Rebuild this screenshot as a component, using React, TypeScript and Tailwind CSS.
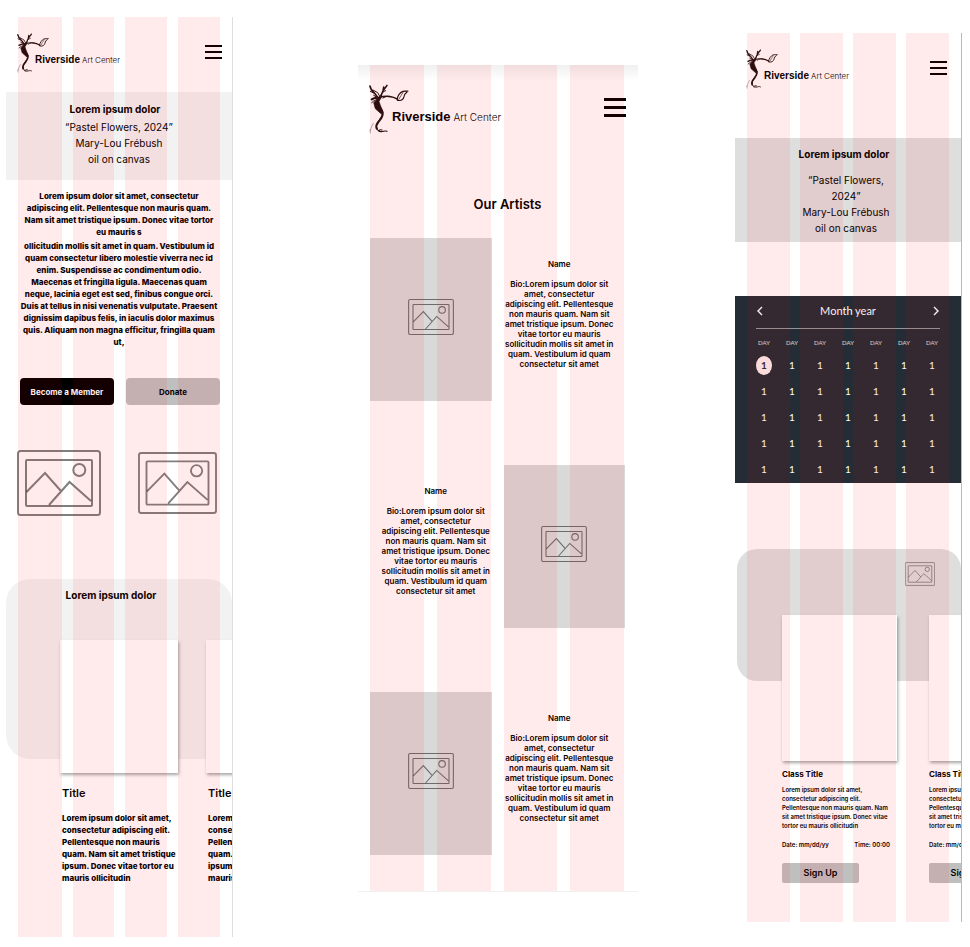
import type { ReactNode } from "react";

const BIO = `Bio:Lorem ipsum dolor sit
amet, consectetur
adipiscing elit. Pellentesque
non mauris quam. Nam sit
amet tristique ipsum. Donec
vitae tortor eu mauris
sollicitudin mollis sit amet in
quam. Vestibulum id quam
consectetur sit amet`;

const INTRO_START = `Lorem ipsum dolor sit amet, consectetur
adipiscing elit. Pellentesque non mauris quam.
Nam sit amet tristique ipsum. Donec vitae tortor
eu mauris s`;

const INTRO_END = `ollicitudin mollis sit amet in quam. Vestibulum id
quam consectetur libero molestie viverra nec id
enim. Suspendisse ac condimentum odio.
Maecenas et fringilla ligula. Maecenas quam
neque, lacinia eget est sed, finibus congue orci.
Duis at tellus in nisi venenatis vulputate. Praesent
dignissim dapibus felis, in iaculis dolor maximus
quis. Aliquam non magna efficitur, fringilla quam
ut,`;

const CARD_TEXT = `Lorem ipsum dolor sit amet,
consectetur adipiscing elit.
Pellentesque non mauris
quam. Nam sit amet tristique
ipsum. Donec vitae tortor eu
mauris ollicitudin`;

const CLASS_TEXT = `Lorem ipsum dolor sit amet,
consectetur adipiscing elit.
Pellentesque non mauris quam. Nam
sit amet tristique ipsum. Donec vitae
tortor eu mauris ollicitudin`;

/** Tinted four-column layout grid laid over a whole screen. */
function ColumnOverlay({ className }: { className: string }) {
  return (
    <div
      aria-hidden="true"
      className={`pointer-events-none absolute inset-0 z-10 grid ${className}`}
    >
      {[0, 1, 2, 3].map((i) => (
        <div key={i} className="bg-[#ff0000]/8" />
      ))}
    </div>
  );
}

function Tree({ className }: { className: string }) {
  return (
    <svg viewBox="0 0 120 150" className={className} fill="none" stroke="#1c0f0f" strokeLinecap="round" aria-hidden="true">
      <path d="M3 6c1 10 8 17 14 22l12 16" strokeWidth="5" />
      <path d="M12 18l14 8 8 14M4 22l8 4M14 34l10 6" strokeWidth="3" />
      <path d="M54 4c-6 10-16 17-18 34M42 20l2-11" strokeWidth="4.500" />
      <path d="M50 20c-6 2-14 8-16 16" strokeWidth="3" />
      <path d="M8 46c8-6 16-4 24-5" strokeWidth="6" />
      <path d="M32 40c12-4 24-4 34-2 8 1 14 5 20 8" strokeWidth="4.500" />
      <path d="M8 56c8-8 14-8 22-12M42 42c8-5 16-7 24-4" strokeWidth="3" />
      <path d="M84 47c2-12 10-22 18-25 5-1 9 0 15-1M86 49c10 2 17-3 19-11 1-6 4-10 9-14" strokeWidth="3.500" />
      <path d="M90 45c4-8 8-13 12-19" strokeWidth="2" />
      <path d="M32 38l-18 18 5 18 18 16 4-10-7-16-4-12 6-10z" fill="#1c0f0f" strokeWidth="2" />
      <path d="M26 66c8 8 15 14 15 22 1 12-7 18-13 26-6 7-8 12-5 20" strokeWidth="6" />
      <path d="M42 84c0 12-10 22-17 32" strokeWidth="3" />
      <path d="M22 128c2 9 6 16 16 15 7-1 10-4 16-1M30 142c0-4 3-6 9-4" strokeWidth="3.500" />
      <path d="M13 118c-5 8-7 14-9 22M3 138l1 9" stroke="#8a7777" strokeWidth="2" />
    </svg>
  );
}

function Picture({ className }: { className: string }) {
  return (
    <svg
      viewBox="0 0 84 66"
      className={`text-black/50 ${className}`}
      fill="none"
      stroke="currentColor"
      strokeWidth="2"
      role="img"
      aria-label="Image placeholder"
    >
      <rect x="1" y="1" width="82" height="64" rx="2.5" />
      <rect x="9" y="10" width="66" height="46" rx="1" />
      <circle cx="62.3" cy="20" r="6" />
      <path d="M9.5 42 28 23l16 18M32 55l20.500-23L74 51" />
    </svg>
  );
}

function MenuButton({ large = false }: { large?: boolean }) {
  return (
    <button type="button" aria-label="Open menu" className={large ? "flex w-[22px] flex-col gap-[5px]" : "flex w-[17px] flex-col gap-1"}>
      {[0, 1, 2].map((i) => (
        <span key={i} className={large ? "h-[3px] w-full bg-black" : "h-0.5 w-full bg-black"} />
      ))}
    </button>
  );
}

function Logo({ large = false }: { large?: boolean }) {
  return (
    <a href="#home" className="flex items-start">
      <Tree className={large ? "h-[50px] w-10" : "h-10 w-8"} />
      <span
        className={
          large
            ? "-ml-[17px] flex items-baseline gap-[3px] pt-6 font-['Liberation_Sans',Arial,sans-serif] text-[13px] leading-[18px] font-bold whitespace-nowrap"
            : "-ml-3.5 flex items-baseline gap-0.5 pt-5 font-['Liberation_Sans',Arial,sans-serif] text-[10px] leading-[14px] font-bold whitespace-nowrap"
        }
      >
        Riverside
        <span className={large ? "font-['Inter',sans-serif] text-[10px] font-light" : "font-['Inter',sans-serif] text-[8px] font-light"}>
          Art Center
        </span>
      </span>
    </a>
  );
}

function Banner({ className, title, children }: { className: string; title: string; children: ReactNode }) {
  return (
    <section className={`text-center ${className}`}>
      <h2 className="pr-2 text-[10px] leading-4 font-bold">{title}</h2>
      {children}
    </section>
  );
}

const cardShadow = "shadow-[1px_2px_3px_rgba(0,0,0,0.35)]";

function HomeScreen() {
  return (
    <main className="relative mt-[17px] flex flex-col overflow-hidden border-r border-[#dedede] bg-white pb-[53px]">
      <ColumnOverlay className="grid-cols-[44fr_42fr_42fr_42fr] gap-[11px] px-3" />
      <header className="flex h-[75px] items-start justify-between pt-4 pr-2.5 pl-[11px]">
        <Logo />
        <div className="pt-3">
          <MenuButton />
        </div>
      </header>
      <Banner className="h-[88px] bg-black/5 pt-[9px]" title="Lorem ipsum dolor">
        <p className="pt-0.5 text-[10px] leading-4 whitespace-pre-line">{"“Pastel Flowers, 2024”\nMary-Lou Frébush\noil on canvas"}</p>
      </Banner>
      <div className="pt-2.5 text-center text-[8px] leading-3 font-extrabold whitespace-pre">
        <p>{INTRO_START}</p>
        <p className="pt-0.5">{INTRO_END}</p>
      </div>
      <div className="mt-[30px] flex gap-3 pr-3 pl-3.5 text-[8px] font-bold">
        <button type="button" className="h-[27px] flex-1 rounded-[4px] bg-black text-white">Become a Member</button>
        <button type="button" className="h-[27px] flex-1 rounded-[4px] bg-black/25">Donate</button>
      </div>
      <div className="mt-[45px] flex items-center justify-between pr-[15px] pl-[11px]">
        <Picture className="h-[66px] w-[84px]" />
        <Picture className="h-[62px] w-[79px]" />
      </div>
      <section className="mt-[63px]">
        <div className="h-[180px] rounded-3xl bg-black/5 pt-2">
          <h2 className="pr-4 text-center text-[10px] leading-4 font-bold">Lorem ipsum dolor</h2>
        </div>
        <div className="-mt-[119px] flex gap-7 pl-[54px]">
          {[0, 1].map((i) => (
            <article key={i} className="w-[118px] shrink-0">
              <div className={`h-[133px] bg-white ${cardShadow}`} />
              <h3 className="pt-3 pl-0.5 text-[11px] leading-4 font-semibold">Title</h3>
              <p className="pt-[11px] pl-0.5 text-[8px] leading-3 font-extrabold whitespace-pre">{CARD_TEXT}</p>
            </article>
          ))}
        </div>
      </section>
    </main>
  );
}

function ArtistRow({ flipped = false }: { flipped?: boolean }) {
  return (
    <article className="grid grid-cols-2 items-start gap-3">
      <div className={flipped ? "order-2 flex h-[163px] items-center justify-center bg-black/15 pb-1.5" : "flex h-[163px] items-center justify-center bg-black/15 pb-1.5"}>
        <Picture className="h-9 w-[46px]" />
      </div>
      <div className={flipped ? "flex flex-col items-center pt-[21px] pl-2.5 text-[8px] leading-[10px]" : "flex flex-col items-center pt-[21px] pr-2.5 text-[8px] leading-[10px]"}>
        <h3 className="font-semibold">Name</h3>
        <p className="pt-2.5 text-center font-semibold whitespace-pre">{BIO}</p>
      </div>
    </article>
  );
}

function ArtistsScreen() {
  return (
    <main className="relative mt-[65px] ml-7 overflow-hidden border-b border-[#f0f0f0] bg-linear-to-b from-black/6 to-transparent to-[16px] pb-9">
      <ColumnOverlay className="grid-cols-4 gap-[13px] pr-3.5 pl-3" />
      <header className="flex items-start justify-between pt-[19px] pr-3 pl-[11px]">
        <Logo large />
        <div className="pt-3.5">
          <MenuButton large />
        </div>
      </header>
      <h1 className="pt-[61px] pl-[19px] text-center text-[13px] leading-[18px] font-semibold">Our Artists</h1>
      <div className="flex flex-col gap-16 pt-[25px] pr-[13px] pl-3">
        <ArtistRow />
        <ArtistRow flipped />
        <ArtistRow />
      </div>
    </main>
  );
}

function Chevron({ label, path }: { label: string; path: string }) {
  return (
    <button type="button" aria-label={label}>
      <svg viewBox="0 0 6 10" className="h-2.5 w-1.5" fill="none" stroke="white" strokeWidth="1.4" aria-hidden="true">
        <path d={path} />
      </svg>
    </button>
  );
}

function Calendar() {
  const week = [0, 1, 2, 3, 4, 5, 6];
  return (
    <section className="mt-[54px] h-[187px] bg-[#242d35] px-[15px] font-['Lato',sans-serif] text-white">
      <div className="mx-1.5 flex h-[33px] items-center justify-between border-b border-white/50 px-px pb-0.5">
        <Chevron label="Previous month" path="M5 1 1 5l4 4" />
        <h2 className="text-[11px] leading-4">Month year</h2>
        <Chevron label="Next month" path="M1 1l4 4-4 4" />
      </div>
      <table className="w-full table-fixed text-center">
        <thead>
          <tr className="h-[23px] text-[6px] leading-3 text-white/80">
            {week.map((d) => (
              <th key={d} className="p-0 pt-1 font-normal">DAY</th>
            ))}
          </tr>
        </thead>
        <tbody className="text-[10px] leading-4">
          {[0, 1, 2, 3, 4].map((w) => (
            <tr key={w} className="h-[26px]">
              {week.map((d) => (
                <td key={d} className="p-0">
                  {w === 0 && d === 0 ? (
                    <span className="mx-auto flex h-[19px] w-4 items-center justify-center rounded-[50%] bg-[#fbeeee] font-bold text-[#242d35]">1</span>
                  ) : (
                    "1"
                  )}
                </td>
              ))}
            </tr>
          ))}
        </tbody>
      </table>
    </section>
  );
}

function ClassesScreen() {
  return (
    <main className="relative mt-[33px] flex flex-col overflow-hidden border-r border-[#bdb8b8] bg-white pb-[39px]">
      <ColumnOverlay className="grid-cols-4 gap-2.5 px-3" />
      <header className="flex h-[105px] items-start justify-between pt-4 pr-3.5 pl-[11px]">
        <Logo />
        <div className="pt-3">
          <MenuButton />
        </div>
      </header>
      <Banner className="h-[104px] bg-black/13 pt-2" title="Lorem ipsum dolor">
        <p className="pt-2.5 pr-1 text-[10px] leading-4 whitespace-pre-line">{"“Pastel Flowers,\n2024”\nMary-Lou Frébush\noil on canvas"}</p>
      </Banner>
      <Calendar />
      <section className="mt-[66px]">
        <div className="ml-0.5 flex h-[132px] justify-end rounded-[20px] bg-black/13 pt-[13px] pr-[26px]">
          <Picture className="h-6 w-[30px]" />
        </div>
        <div className="-mt-[66px] flex gap-8 pl-[47px]">
          {[0, 1].map((i) => (
            <article key={i} className="w-[115px] shrink-0">
              <div className={`h-[146px] bg-white ${cardShadow}`} />
              <h3 className="pt-[7px] text-[8px] leading-3 font-bold">Class Title</h3>
              <p className="pt-[5px] text-[6px] leading-[9px] font-semibold whitespace-pre">{CLASS_TEXT}</p>
              <div className="mr-[7px] flex justify-between pt-2.5 text-[6px] leading-[9px] font-semibold">
                <span>Date: mm/dd/yy</span>
                <span>Time: 00:00</span>
              </div>
              <button type="button" className="mt-3.5 h-5 w-[77px] rounded-[2px] bg-black/25 text-[9px] font-semibold">Sign Up</button>
            </article>
          ))}
        </div>
      </section>
    </main>
  );
}

export default function App() {
  return (
    <div className="grid min-h-screen grid-cols-[227fr_308fr_227fr] items-start gap-x-[97px] bg-white pr-2 pl-1.5 font-['Inter',sans-serif] text-black">
      <HomeScreen />
      <ArtistsScreen />
      <ClassesScreen />
    </div>
  );
}
